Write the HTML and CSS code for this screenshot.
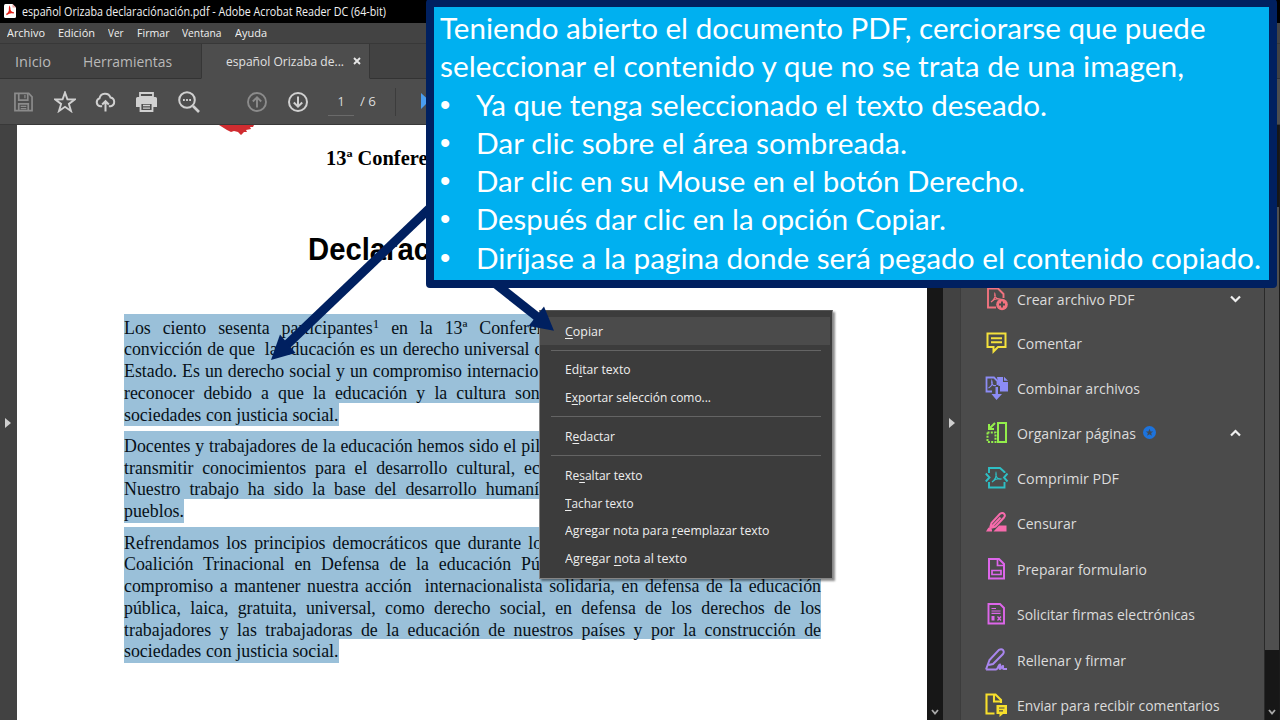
FILE: index.html
```html
<!DOCTYPE html>
<html lang="es">
<head>
<meta charset="utf-8">
<title>español Orizaba declaraciónación.pdf - Adobe Acrobat Reader DC (64-bit)</title>
<link rel="stylesheet" href="styles.css">
</head>
<body>
<div class="screen">
  <header class="titlebar">
    <svg class="app-icon" viewBox="0 0 12 14"><path d="M1.500 0H8.500L12 3.500V12.500Q12 14 10.500 14H1.500Q0 14 0 12.500V1.500Q0 0 1.500 0Z" fill="#fff"/><path d="M8.500 0L12 3.500H8.500Z" fill="#f3a3a3"/><path d="M2.500 10.500C4.500 9.500 6.500 6.500 5.600 3.800C5 6 7 9 9.700 8.700C7 8 4.500 8.700 2.500 10.500Z" fill="none" stroke="#e3231b" stroke-width="1.500"/></svg>
    <span data-w="364">español Orizaba declaraciónación.pdf - Adobe Acrobat Reader DC (64-bit)</span>
  </header>
  <nav class="menubar">
    <div><span data-w="38">Archivo</span></div>
    <div><span data-w="37">Edición</span></div>
    <div><span data-w="15.500">Ver</span></div>
    <div><span data-w="32.500">Firmar</span></div>
    <div><span data-w="39.500">Ventana</span></div>
    <div><span data-w="32">Ayuda</span></div>
  </nav>
  <div class="tabs">
    <div class="tab-home"><span data-w="36">Inicio</span></div>
    <div class="tab-tools"><span data-w="89">Herramientas</span></div>
    <div class="tab-active"><span data-w="118">español Orizaba de...</span>
      <svg class="close" viewBox="0 0 8 8"><path d="M1 1L7 7M7 1L1 7" stroke="#e6e6e6" stroke-width="1.900"/></svg></div>
  </div>
  <div class="toolbar">
    <svg class="t-save" viewBox="0 0 20 20" fill="none" stroke="#8b8b8b" stroke-width="1.800"><path d="M1 1H15.500L19 4.500V19H1Z"/><path d="M5 1V8H14.500V1M5 19V12H15V19"/><path d="M11.500 2.500V6M7 14.500H13M7 17H13" stroke-width="1.300"/></svg>
    <svg class="t-star" viewBox="0 0 22 22" fill="none" stroke="#d0d0d0" stroke-width="1.900"><path d="M11 1.500L13.400 8.300L20.700 8.500L14.900 12.900L17 20L11 15.800L5 20L7.100 12.900L1.300 8.500L8.600 8.300Z"/></svg>
    <svg class="t-cloud" viewBox="0 0 22 20" fill="none" stroke="#d0d0d0" stroke-width="2.100"><path d="M7.500 14.500H5.500A4.300 4.300 0 0 1 4.700 6.200A6 6 0 0 1 16.200 5.300A4.700 4.700 0 0 1 16.500 14.500H14.500"/><path d="M11 20V9.500M7.500 12.700L11 9.200L14.500 12.700"/></svg>
    <svg class="t-print" viewBox="0 0 21 20"><path d="M4 5V1H17V5Z" fill="none" stroke="#d0d0d0" stroke-width="1.800"/><path d="M0 6.500Q0 5 1.500 5H19.500Q21 5 21 6.500V15H17V11H4V15H0Z" fill="#d0d0d0"/><path d="M4.500 11H16.500V19H4.500Z" fill="#4d4d4d" stroke="#d0d0d0" stroke-width="1.800"/><path d="M7 13.500H14M7 16.200H14" stroke="#d0d0d0" stroke-width="1.300"/></svg>
    <svg class="t-find" viewBox="0 0 22 22" fill="none" stroke="#d0d0d0"><circle cx="9" cy="9" r="7.800" stroke-width="2"/><path d="M15 15L21 21" stroke-width="2.700"/><path d="M5 9H13" stroke-width="1.800" stroke-dasharray="1.800 1.300"/></svg>
    <svg class="t-up" viewBox="0 0 20 20" fill="none" stroke="#8b8b8b" stroke-width="1.900"><circle cx="10" cy="10" r="9"/><path d="M10 15.500V5.500M5.800 9.500L10 5.300L14.200 9.500"/></svg>
    <svg class="t-down" viewBox="0 0 20 20" fill="none" stroke="#d0d0d0" stroke-width="2"><circle cx="10" cy="10" r="9"/><path d="M10 4.500V14.500M5.800 10.500L10 14.700L14.200 10.500"/></svg>
    <div class="page-now">1</div>
    <div class="page-total"><span data-w="16">/ 6</span></div>
    <div class="divider"></div>
    <svg class="t-cursor" viewBox="0 0 12 18"><path d="M0 0L12 11H5L0 16Z" fill="#4a9df0"/></svg>
  </div>
  <main class="work">
    <aside class="rail"><svg viewBox="0 0 6 10"><path d="M0 0L6 5L0 10Z" fill="#cfcfcf"/></svg></aside>
    <article class="page">
      <svg class="crest" viewBox="0 0 36 12"><path d="M0 0H35L34 2L31 2L32 4L27 5L28 7L25 7L22 10L19 7L15 6L12 7L8 5Z" fill="#d02c30"/></svg>
      <h2 class="conference">13ª Confere</h2>
      <h1 class="headline"><span data-w="122">Declarac</span></h1>
      <div class="para one">
        <p><span data-word="355.300">Los ciento sesenta participantes<sup>1</sup> en la 13ª </span>Conferen</p>
        <p><span data-word="410.500">convicción de que  la educación es un derecho universal </span>d</p>
        <p><span data-word="343">Estado. Es un derecho social y un compromiso </span>internacio</p>
        <p><span data-word="391">reconocer debido a que la educación y la cultura </span>son</p>
        <p class="last"><span data-word="214.500">sociedades con justicia social.</span></p>
      </div>
      <div class="para two">
        <p><span data-word="397.300">Docentes y trabajadores de la educación hemos sido el </span>pil</p>
        <p><span data-word="400">transmitir conocimientos para el desarrollo cultural, </span>ec</p>
        <p><span data-word="361.700">Nuestro trabajo ha sido la base del desarrollo </span>humaní</p>
        <p class="last"><span data-word="60.500">pueblos.</span></p>
      </div>
      <div class="para three">
        <p><span data-word="404.300">Refrendamos los principios democráticos que durante </span>lo</p>
        <p><span data-word="397">Coalición Trinacional en Defensa de la educación </span>Pú</p>
        <p><span data-word="697">compromiso a mantener nuestra acción  internacionalista solidaria, en defensa de la educación</span></p>
        <p><span data-word="697">pública, laica, gratuita, universal, como derecho social, en defensa de los derechos de los</span></p>
        <p><span data-word="697">trabajadores y las trabajadoras de la educación de nuestros países y por la construcción de</span></p>
        <p class="last"><span data-word="214.500">sociedades con justicia social.</span></p>
      </div>
    </article>
    <div class="scroll"><svg viewBox="0 0 8 6"><path d="M1 1L4 4.500L7 1" fill="none" stroke="#a8a8a8" stroke-width="1.800"/></svg></div>
    <aside class="rail right"><svg viewBox="0 0 6 10"><path d="M0 0L6 5L0 10Z" fill="#cfcfcf"/></svg></aside>
    <aside class="tools">
      <div class="tool"><svg viewBox="0 0 24 24" fill="none" stroke="#f2737f" stroke-width="1.900"><path d="M11 20.500H3V1.500H13L18.500 7V11"/><path d="M6 15C9 13 11 9 9.800 6.500C9 9 12 13 15 12C12 11 8.500 12.500 6 15Z" stroke-width="1.200"/><circle cx="17" cy="17.500" r="5.800" fill="#f2737f" stroke="none"/><path d="M17 14.500V20.500M14 17.500H20" stroke="#4b4b4b"/></svg><span data-w="117.500">Crear archivo PDF</span><svg class="chev" viewBox="0 0 12 8"><path d="M1.500 1.500L6 6L10.500 1.500" fill="none" stroke="#f0f0f0" stroke-width="2.200"/></svg></div>
      <div class="tool"><svg viewBox="0 0 24 24" fill="none" stroke="#f4e13c" stroke-width="2"><path d="M2.500 2.500H20.500V16H13L8.500 20.500V16H2.500Z"/><path d="M6 7.200H17M6 11.300H17"/></svg><span data-w="65">Comentar</span></div>
      <div class="tool"><svg viewBox="0 0 24 24" fill="none" stroke="#8c8cf5" stroke-width="1.800"><path d="M7 15.500H1.500V1.500H9L12.500 5V9"/><path d="M3.500 12C7 10 8 8 6.800 5C6 8 8 10 11 9.500" stroke-width="1.200"/><path d="M12 1H18V6H23V15.500H15V10H13.500Z" fill="#8c8cf5" stroke="none"/><path d="M19 0.800L23 4.800H19Z" fill="#8c8cf5" stroke="none"/><path d="M10.500 11H13V18H17L11.500 24L6.500 18H10.500Z" fill="#8c8cf5" stroke="none"/></svg><span data-w="123">Combinar archivos</span></div>
      <div class="tool"><svg viewBox="0 0 24 24" fill="none" stroke="#93ee4b" stroke-width="2"><path d="M13 2H21V21H13Z"/><path d="M2.500 11.500H10.500V21H2.500Z" stroke-dasharray="2 1.300"/><path d="M10 2L4.500 7.500M4 3V8H9"/></svg><span data-w="119">Organizar páginas</span><svg class="badge" viewBox="0 0 12 12"><circle cx="6" cy="6" r="6" fill="#1d73dc"/><path d="M6 2.500L7 5H9.500L7.500 6.500L8.200 9L6 7.600L3.800 9L4.500 6.500L2.500 5H5Z" fill="#414b56"/></svg><svg class="chev" viewBox="0 0 12 8"><path d="M1.500 6.500L6 2L10.500 6.500" fill="none" stroke="#f0f0f0" stroke-width="2.200"/></svg></div>
      <div class="tool"><svg viewBox="0 0 24 24" fill="none" stroke="#2ebfc5" stroke-width="1.900"><path d="M4 7V2H15L19.500 6V7M4 16V21.500H19.500V16"/><path d="M0.800 7.500L4.500 11.500L0.800 15.500M22.500 7.500L19 11.500L22.500 15.500"/><path d="M7 16C10 14 12 10 11 7C10 10 13 14 16 13C13 12 10 13 7 16Z" stroke-width="1.200"/></svg><span data-w="102">Comprimir PDF</span></div>
      <div class="tool wide"><svg viewBox="0 0 24 24" fill="none" stroke="#f76bac" stroke-width="2"><path d="M5 17L6.500 12L15 2.800Q17.500 1 19.300 3Q20.500 4.500 19 6.500L10.500 15.500L5.500 17L15.500 6.500"/><path d="M1 20.500L3.500 16.500L7 18.500V20.500Z" fill="#f76bac" stroke="none"/><path d="M8.500 20.500L14 14.500H21.500V20.500Z" fill="#f76bac" stroke="none"/></svg><span data-w="59.500">Censurar</span></div>
      <div class="tool wide"><svg viewBox="0 0 24 24" fill="none" stroke="#dd66ea" stroke-width="2"><path d="M4 2H14L19 7V21.500H4Z"/><path d="M12.500 2V8.500H19M7 13.500H16V17.500H7Z" stroke-width="1.700"/></svg><span data-w="130">Preparar formulario</span></div>
      <div class="tool wide"><svg viewBox="0 0 24 24" fill="none" stroke="#dd66ea" stroke-width="1.900"><path d="M3.500 2H15L19 6V21.500H3.500Z"/><path d="M6.500 6.500H11M6.500 9H15.500M6.500 11.300H15.500" stroke-width="1.200"/><path d="M8 14V18.500" stroke-width="3"/><path d="M12.500 14.500L16 18.500M16 14.500L12.500 18.500" stroke-width="1.300"/></svg><span data-w="178">Solicitar firmas electrónicas</span></div>
      <div class="tool wide"><svg viewBox="0 0 24 24" fill="none" stroke="#a986ee" stroke-width="2"><path d="M1 21.500L4.500 12L14 1.800Q16.500 0.500 18 2Q19.500 4 18 6L8 16L3.500 17M1 21.500H11C13 21.500 13.500 16 15 16.500C16 17 13.500 21 15 21C16.500 21 16.500 17.500 18 18C18.500 19 17 21 19 21H22"/></svg><span data-w="109">Rellenar y firmar</span></div>
      <div class="tool wide"><svg viewBox="0 0 24 24" fill="none" stroke="#f7df2c" stroke-width="2.100"><path d="M9.500 20.500H1.500V1.500H10.500L16 7V10"/><path d="M9 1.500V8.500H16"/><path d="M11.500 12H22V21H18L14.500 24V21H11.500Z" fill="#f7df2c" stroke="none"/><path d="M14 15H19.500M14 17.800H18" stroke="#4b4b4b" stroke-width="1.200"/></svg><span data-w="202.500">Enviar para recibir comentarios</span></div>
    </aside>
    <div class="scroll end"><div class="thumb"></div><svg viewBox="0 0 8 6"><path d="M1 1L4 4.500L7 1" fill="none" stroke="#a8a8a8" stroke-width="1.800"/></svg></div>
    <div class="edge"></div>
  </main>

  <div class="context">
    <div class="item on"><span data-w="38"><u>C</u>opiar</span></div>
    <hr>
    <div class="item"><span data-w="65.500">Ed<u>i</u>tar texto</span></div>
    <div class="item"><span data-w="146">E<u>x</u>portar selección como...</span></div>
    <hr>
    <div class="item"><span data-w="50">R<u>e</u>dactar</span></div>
    <hr>
    <div class="item"><span data-w="77.500">Re<u>s</u>altar texto</span></div>
    <div class="item"><span data-w="68.500"><u>T</u>achar texto</span></div>
    <div class="item"><span data-w="204.500">Agregar nota para <u>r</u>eemplazar texto</span></div>
    <div class="item"><span data-w="122">Agregar <u>n</u>ota al texto</span></div>
  </div>

  <svg class="arrows" viewBox="0 0 1280 720">
    <path d="M432 206L284 347.500" stroke="#002060" stroke-width="9"/>
    <path d="M271 360L280 334.500L295.500 353Z" fill="#002060"/>
    <path d="M492 281L540 319" stroke="#002060" stroke-width="9"/>
    <path d="M554 330.700L544 306.500L528.500 326Z" fill="#002060"/>
  </svg>

  <section class="callout">
    <p><span data-w="765.500">Teniendo abierto el documento PDF, cerciorarse que puede</span></p>
    <p><span data-w="744">seleccionar el contenido y que no se trata de una imagen,</span></p>
    <ul>
      <li><span data-w="571">Ya que tenga seleccionado el texto deseado.</span></li>
      <li><span data-w="431">Dar clic sobre el área sombreada.</span></li>
      <li><span data-w="549">Dar clic en su Mouse en el botón Derecho.</span></li>
      <li><span data-w="470">Después dar clic en la opción Copiar.</span></li>
      <li><span data-w="785">Diríjase a la pagina donde será pegado el contenido copiado.</span></li>
    </ul>
  </section>
</div>
<script src="fit.js"></script>
</body>
</html>
```
FILE: styles.css
```css
* { box-sizing: border-box; margin: 0; padding: 0; }
body { background: #424242; font-family: "Open Sans", "Noto Sans", sans-serif; color: #dcdcdc; }
svg { display: block; flex: none; }
[data-w] { display: inline-block; white-space: pre; transform-origin: 0 50%; }
.screen { width: 1280px; height: 720px; position: relative; overflow: hidden; display: flex; flex-direction: column; }

.titlebar { height: 23px; flex: none; background: #000; display: flex; align-items: center; padding-left: 4px; gap: 6px; font-size: 12px; color: #f2f2f2; }
.app-icon { width: 12px; height: 14px; margin-top: -2px; }
.menubar { height: 20px; flex: none; background: #434343; display: flex; align-items: center; padding: 0 0 2px 7px; gap: 13px; font-size: 11.500px; color: #f0f0f0; }
.tabs { height: 36px; flex: none; display: flex; background: #424242; border-top: 1px solid #383838; font-size: 14.500px; }
.tabs > div { display: flex; align-items: center; border-bottom: 1px solid #333; }
.tab-home { width: 83px; padding-left: 15px; color: #b9b9b9; }
.tab-tools { width: 118px; color: #b9b9b9; }
.tabs > .tab-active { width: 169px; background: #4d4d4d; border-left: 1px solid #363636; border-right: 1px solid #363636; border-bottom-color: #4d4d4d; padding-left: 24px; font-size: 13px; color: #e0e0e0; }
.close { width: 8px; height: 8px; margin-left: 9px; }
.tabs::after { content: ""; flex: 1; border-bottom: 1px solid #333; }
.toolbar { height: 46px; flex: none; background: #4d4d4d; border-bottom: 1px solid #393939; display: flex; align-items: center; padding-left: 14px; font-size: 12.500px; }
.t-save { width: 19px; height: 20px; margin-right: 21px; }
.t-star { width: 22px; height: 22px; margin-right: 19px; }
.t-cloud { width: 21px; height: 20px; margin-right: 20px; }
.t-print { width: 21px; height: 20px; margin-right: 21px; }
.t-find { width: 22px; height: 22px; margin-right: 47px; }
.t-up { width: 20px; height: 20px; margin-right: 21px; }
.t-down { width: 20px; height: 20px; margin-right: 20px; }
.page-now { width: 26px; height: 28px; line-height: 27px; text-align: center; border-bottom: 1px solid #6a6a6a; }
.page-total { margin-left: 6px; width: 17px; }
.divider { width: 1px; height: 28px; background: #3c3c3c; margin-left: 18px; }
.t-cursor { width: 12px; height: 18px; margin-left: 25px; }

.work { flex: 1; min-height: 0; display: flex; }
.rail { width: 17px; flex: none; background: #424242; padding: 293px 0 0 5px; }
.rail svg { width: 6px; height: 10px; }
.rail.right { width: 18px; padding-left: 6px; border-right: 1px solid #3c3c3c; }
.page { width: 910px; flex: none; background: #fff; color: #000; padding-left: 107px; overflow: hidden; }
.crest { width: 36px; height: 12px; margin-left: 95px; }
.conference { font: bold 20.400px/22px "Liberation Serif", serif; margin: 10px 0 0 202px; }
.headline { font: bold 30.500px/33px "Liberation Sans", sans-serif; margin: 64px 0 0 184px; height: 33px; }
.para { font: 17.850px/24.600px "Liberation Serif", serif; width: 697px; }
.para p { white-space: pre; background: #9ac0d9; height: 21.800px; color: #071018; }
.para p.last { width: fit-content; height: 23.500px; }
.para sup { font-size: 13px; line-height: 0; vertical-align: 6px; }
.one { margin-top: 47.700px; }
.one p:first-child { padding-top: 2px; height: 23.800px; }
.two { margin-top: 4.500px; }
.two p:first-child { padding-top: 3px; height: 24.800px; }
.three { margin-top: 4px; }
.three p:first-child { padding-top: 4px; height: 25.500px; }
.scroll { width: 16px; flex: none; background: #171717; display: flex; flex-direction: column; justify-content: flex-end; align-items: center; padding-bottom: 5px; }
.scroll svg { width: 8px; height: 6px; }
.tools { width: 303px; flex: none; background: #4b4b4b; padding: 151.300px 0 0 24px; font-size: 15px; overflow: hidden; }
.tool { height: 44.800px; display: flex; align-items: center; }
.tool.wide { height: 45.500px; }
.tool > svg:first-child { width: 24px; height: 24px; margin-right: 8px; }
.tool .chev { width: 13px; height: 8px; margin-left: auto; margin-right: 22px; }
.tool .badge { width: 13px; height: 13px; margin-left: 7px; margin-top: -1px; }
.scroll.end { width: 15px; border-left: 1px solid #2a2a2a; padding-top: 82px; }
.thumb { width: 14px; height: 443px; background: #4f4f4f; margin-bottom: auto; }
.edge { flex: 1; background: #1b1b1b; }

.context { position: absolute; left: 539px; top: 310px; width: 294px; height: 269px; background: #3c3c3c; border: 1px solid #858585; border-top-color: #555; box-shadow: 2px 2px 2px rgba(0,0,0,.45); padding-top: 6px; font-size: 12.500px; color: #eee; }
.item { height: 27.800px; padding: .6px 0 0 25px; display: flex; align-items: center; }
.item.on { background: #4b4b4b; margin-right: 2px; }
.item u { text-underline-offset: 2px; text-decoration-thickness: 1px; }
.context hr { border: 0; height: 1px; background: #646464; margin: 5px 11px; }

.arrows { position: absolute; left: 0; top: 0; width: 1280px; height: 720px; }
.callout { position: absolute; left: 426px; top: -1px; width: 851px; height: 289px; background: #00b0f0; border: 8px solid #002060; border-radius: 4px; padding: 2px 0 0 6px; font: 29.500px/38.300px Lato, sans-serif; color: #fff; }
.callout ul { list-style: none; }
.callout p, .callout li { height: 38.300px; white-space: nowrap; }
.callout li { display: flex; }
.callout li::before { content: "•"; width: 36px; flex: none; font-family: "Liberation Sans", sans-serif; }
```
FILE: fit.js
```js
document.querySelectorAll('[data-w]').forEach(function (el) {
  var w = parseFloat(el.dataset.w);
  var natural = el.getBoundingClientRect().width;
  el.style.transform = 'scaleX(' + w / natural + ')';
  el.style.marginRight = (w - natural) + 'px';
});
// Justify document lines by widening the spaces between words.
document.querySelectorAll('[data-word]').forEach(function (el) {
  var w = parseFloat(el.dataset.word);
  var spaces = (el.textContent.match(/ /g) || []).length;
  if (spaces) {
    el.style.wordSpacing = (w - el.getBoundingClientRect().width) / spaces + 'px';
  }
});
```
